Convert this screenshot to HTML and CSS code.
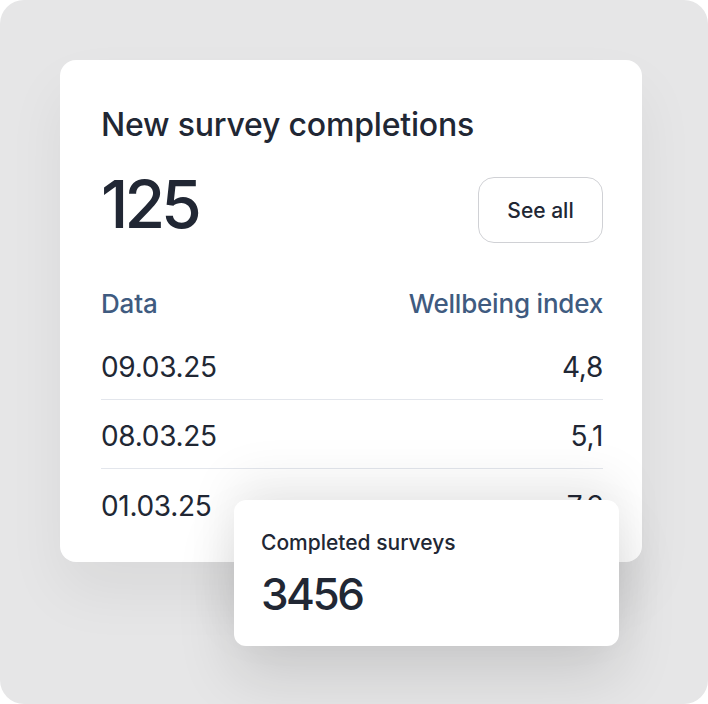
FILE: index.html
```html
<!DOCTYPE html>
<html lang="en">
<head>
    <meta charset="UTF-8" />
    <meta name="viewport" content="width=device-width, initial-scale=1" />
    <title>Survey completions</title>
    <link rel="stylesheet" href="styles.css">
</head>
<body>
    <div class="stage">
        <div class="card">
            <h1 class="card-title">New survey completions</h1>
            <div class="summary">
                <span class="total">125</span>
                <button class="see-all" type="button">See all</button>
            </div>
            <div class="table">
                <div class="row head">
                    <span>Data</span>
                    <span>Wellbeing index</span>
                </div>
                <div class="row">
                    <span>09.03.25</span>
                    <span>4,8</span>
                </div>
                <div class="row">
                    <span>08.03.25</span>
                    <span>5,1</span>
                </div>
                <div class="row">
                    <span>01.03.25</span>
                    <span>7,6</span>
                </div>
            </div>
        </div>

        <div class="stat">
            <div class="stat-label">Completed surveys</div>
            <div class="stat-value">3456</div>
        </div>
    </div>
</body>
</html>
```

FILE: styles.css
```css
body {
    margin: 0;
    background: #fff;
    font-family: Inter, "Liberation Sans", Arial, sans-serif;
    color: #212734;
}
.stage {
    position: relative;
    width: 708px;
    height: 704px;
    background: #e6e6e7;
    border-radius: 24px;
    padding: 60px 66px 0 60px;
    box-sizing: border-box;
    overflow: hidden;
}
.card {
    background: #fff;
    border-radius: 16px;
    height: 502px;
    padding: 39px 39px 0 41px;
    box-sizing: border-box;
    overflow: hidden;
    box-shadow: 0 30px 60px rgba(0, 0, 0, 0.06);
}
.card-title {
    margin: 0;
    font-size: 32px;
    font-weight: 500;
    line-height: 52px;
    letter-spacing: -0.2px;
}
.summary {
    display: flex;
    justify-content: space-between;
    align-items: flex-start;
    margin-top: 26px;
}
.total {
    margin-top: -6px;
    font-size: 66px;
    font-weight: 500;
    line-height: 66px;
    letter-spacing: -4px;
}
.see-all {
    width: 125px;
    height: 66px;
    border: 1px solid #d0d1d5;
    border-radius: 16px;
    background: #fff;
    font-family: inherit;
    font-size: 21px;
    font-weight: 500;
    color: #212734;
    cursor: pointer;
}
.table {
    margin-top: 32px;
}
.row {
    display: flex;
    justify-content: space-between;
    align-items: center;
    height: 69px;
    padding-top: 4px;
    box-sizing: border-box;
    border-bottom: 1px solid #e3e6ec;
    font-size: 28px;
    letter-spacing: -0.3px;
}
.row.head {
    height: 56px;
    padding-top: 0;
    border-bottom: none;
    font-size: 26px;
    font-weight: 500;
    color: #3f5b80;
    letter-spacing: -0.2px;
}
.row:last-child {
    border-bottom: none;
}
.stat {
    position: absolute;
    left: 234px;
    top: 500px;
    width: 385px;
    height: 146px;
    padding: 31px 27px 0;
    box-sizing: border-box;
    background: #fff;
    border-radius: 12px;
    box-shadow: 0 -20px 50px rgba(0, 0, 0, 0.08), 0 30px 60px rgba(0, 0, 0, 0.12);
}
.stat-label {
    font-size: 21px;
    font-weight: 500;
    line-height: 24px;
}
.stat-value {
    margin-top: 15px;
    font-size: 44px;
    font-weight: 500;
    line-height: 48px;
    letter-spacing: -2.5px;
}
```
